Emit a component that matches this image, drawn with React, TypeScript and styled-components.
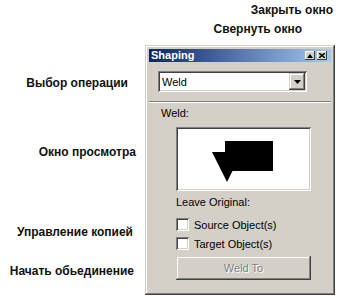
import styled, { createGlobalStyle } from "styled-components";

const GlobalStyle = createGlobalStyle`
  html, body {
    margin: 0;
    padding: 0;
    background: #fff;
  }
  body {
    font-family: "Liberation Sans", Arial, sans-serif;
  }
`;

const Page = styled.div`
  width: 338px;
  height: 299px;
  overflow: hidden;
  background: #fff;
`;

const TopNotes = styled.div`
  display: flex;
  flex-direction: column;
  align-items: flex-end;
  padding-top: 2px;
`;

const Note = styled.div<{ $right: number; $top?: number }>`
  font-size: 12px;
  font-weight: bold;
  color: #111;
  line-height: 16px;
  margin-top: ${(p) => p.$top ?? 0}px;
  padding-right: ${(p) => p.$right}px;
  white-space: nowrap;
`;

const Main = styled.div`
  display: flex;
  margin-top: 8px;
`;

const Notes = styled.div`
  width: 145px;
  display: flex;
  flex-direction: column;
  align-items: flex-end;
`;

const Window = styled.div`
  width: 190px;
  height: 250px;
  box-sizing: border-box;
  background: #d4d0c8;
  padding: 4px;
  display: flex;
  flex-direction: column;
  box-shadow: inset -1px -1px #404040, inset 1px 1px #d4d0c8,
    inset -2px -2px #808080, inset 2px 2px #fff;
`;

const TitleBar = styled.div`
  height: 13px;
  display: flex;
  align-items: center;
  padding: 0 4px 0 2px;
  background: linear-gradient(to right, #0a246a, #a6caf0);
`;

const Title = styled.span`
  flex: 1;
  color: #fff;
  font-size: 11px;
  font-weight: bold;
  line-height: 13px;
`;

const TitleButton = styled.button`
  width: 10px;
  height: 9px;
  padding: 0;
  margin-left: 2px;
  border: none;
  background: #d4d0c8;
  display: flex;
  align-items: center;
  justify-content: center;
  box-shadow: inset -1px -1px #404040, inset 1px 1px #fff;
`;

const Content = styled.div`
  flex: 1;
  display: flex;
  flex-direction: column;
  padding-top: 9px;
`;

const Combo = styled.div`
  width: 149px;
  height: 21px;
  box-sizing: border-box;
  margin-left: 9px;
  background: #fff;
  display: flex;
  align-items: center;
  padding: 2px;
  box-shadow: inset 1px 1px #808080, inset -1px -1px #fff,
    inset 2px 2px #404040, inset -2px -2px #d4d0c8;
`;

const ComboText = styled.span`
  flex: 1;
  font-size: 11px;
  padding-left: 2px;
  color: #000;
`;

const ComboButton = styled.div`
  width: 16px;
  height: 17px;
  background: #d4d0c8;
  display: flex;
  align-items: center;
  justify-content: center;
  box-shadow: inset -1px -1px #404040, inset 1px 1px #d4d0c8,
    inset -2px -2px #808080, inset 2px 2px #fff;
`;

const Separator = styled.div`
  height: 0;
  margin-top: 9px;
  border-top: 1px solid #808080;
  border-bottom: 1px solid #fff;
`;

const Label = styled.div<{ $left: number; $top: number }>`
  font-size: 11px;
  line-height: 13px;
  color: #000;
  margin-left: ${(p) => p.$left}px;
  margin-top: ${(p) => p.$top}px;
`;

const Preview = styled.div`
  width: 135px;
  height: 64px;
  box-sizing: border-box;
  margin-left: 27px;
  margin-top: 7px;
  background: #fff;
  padding: 2px;
  display: flex;
  box-shadow: inset 1px 1px #808080, inset -1px -1px #fff,
    inset 2px 2px #404040, inset -2px -2px #d4d0c8;
`;

const CheckRow = styled.label<{ $top: number }>`
  display: flex;
  align-items: center;
  margin-left: 27px;
  margin-top: ${(p) => p.$top}px;
  font-size: 11px;
  color: #000;
  height: 13px;
`;

const CheckBox = styled.span`
  width: 13px;
  height: 13px;
  box-sizing: border-box;
  background: #fff;
  margin-right: 5px;
  box-shadow: inset 1px 1px #808080, inset -1px -1px #fff,
    inset 2px 2px #404040, inset -2px -2px #d4d0c8;
`;

const WeldButton = styled.button`
  width: 135px;
  height: 24px;
  margin-left: 27px;
  margin-top: 6px;
  padding: 0;
  border: none;
  background: #d4d0c8;
  font-family: "Liberation Sans", Arial, sans-serif;
  font-size: 11px;
  color: #808080;
  text-shadow: 1px 1px #fff;
  box-shadow: inset -1px -1px #404040, inset 1px 1px #d4d0c8,
    inset -2px -2px #808080, inset 2px 2px #fff;
`;

const notes = [
  { text: "Выбор операции", right: 17, top: 30 },
  { text: "Окно просмотра", right: 9, top: 53 },
  { text: "Управление копией", right: 12, top: 64 },
  { text: "Начать обьединение", right: 11, top: 23 },
];

export default function App() {
  return (
    <Page>
      <GlobalStyle />
      <TopNotes>
        <Note $right={5}>Закрыть окно</Note>
        <Note $right={36} $top={3}>Свернуть окно</Note>
      </TopNotes>
      <Main>
        <Notes>
          {notes.map((n) => (
            <Note key={n.text} $right={n.right} $top={n.top}>
              {n.text}
            </Note>
          ))}
        </Notes>
        <Window>
          <TitleBar>
            <Title>Shaping</Title>
            <TitleButton>
              <svg width="6" height="4" viewBox="0 0 6 4">
                <path d="M3 0 L6 4 L0 4 Z" fill="#000" />
              </svg>
            </TitleButton>
            <TitleButton>
              <svg width="6" height="5" viewBox="0 0 6 5">
                <path d="M0 0 L6 5 M6 0 L0 5" stroke="#000" strokeWidth="1.4" />
              </svg>
            </TitleButton>
          </TitleBar>
          <Content>
            <Combo>
              <ComboText>Weld</ComboText>
              <ComboButton>
                <svg width="7" height="4" viewBox="0 0 7 4">
                  <path d="M0 0 L7 0 L3.5 4 Z" fill="#000" />
                </svg>
              </ComboButton>
            </Combo>
            <Separator />
            <Label $left={12} $top={4}>Weld:</Label>
            <Preview>
              <svg width="131" height="60" viewBox="0 0 131 60">
                <path d="M34 23 L64 23 L49 53 Z" fill="#000" />
                <rect x="47" y="12" width="48" height="30" fill="#000" />
              </svg>
            </Preview>
            <Label $left={27} $top={5}>Leave Original:</Label>
            <CheckRow $top={9}>
              <CheckBox />
              Source Object(s)
            </CheckRow>
            <CheckRow $top={6}>
              <CheckBox />
              Target Object(s)
            </CheckRow>
            <WeldButton disabled>Weld To</WeldButton>
          </Content>
        </Window>
      </Main>
    </Page>
  );
}
